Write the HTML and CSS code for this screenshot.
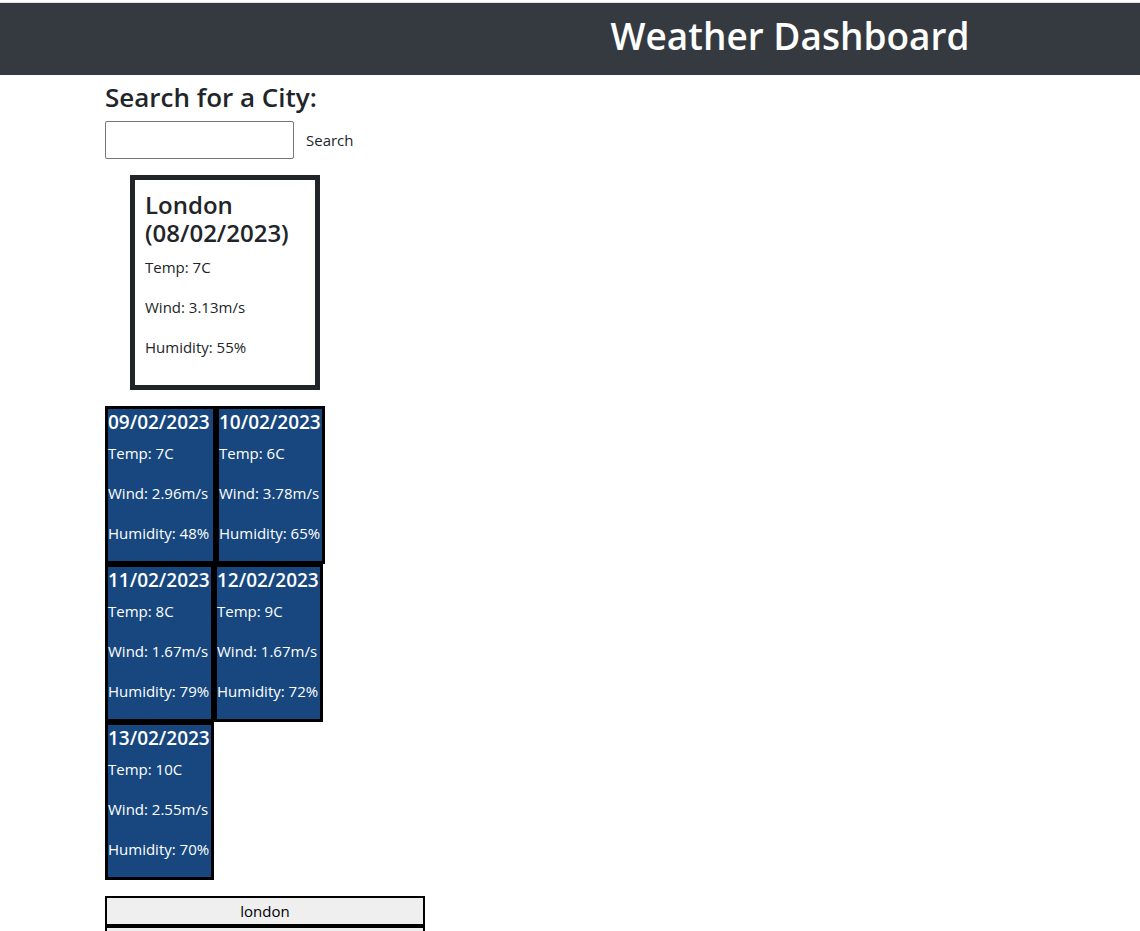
FILE: index.html
```
<!DOCTYPE html>
<html lang="en">
<head>
<meta charset="utf-8">
<meta name="viewport" content="width=device-width, initial-scale=1">
<title>Weather Dashboard</title>
<link rel="stylesheet" href="styles.css">
</head>
<body>
<header class="banner"><h1 class="banner-title">Weather Dashboard</h1></header>
<main class="container">
  <form class="search">
    <label class="search-label" for="city">Search for a City:</label>
    <div class="search-row">
      <input class="search-input" id="city" type="text">
      <button class="search-button" type="button">Search</button>
    </div>
  </form>
  <section class="today">
    <h2 class="today-title">London (08/02/2023)</h2>
    <p>Temp: 7C</p>
    <p>Wind: 3.13m/s</p>
    <p>Humidity: 55%</p>
  </section>
  <section class="forecast">
    <article class="day day-wide">
      <h3 class="day-title">09/02/2023</h3>
      <p>Temp: 7C</p>
      <p>Wind: 2.96m/s</p>
      <p>Humidity: 48%</p>
    </article>
    <article class="day">
      <h3 class="day-title">10/02/2023</h3>
      <p>Temp: 6C</p>
      <p>Wind: 3.78m/s</p>
      <p>Humidity: 65%</p>
    </article>
    <article class="day">
      <h3 class="day-title">11/02/2023</h3>
      <p>Temp: 8C</p>
      <p>Wind: 1.67m/s</p>
      <p>Humidity: 79%</p>
    </article>
    <article class="day">
      <h3 class="day-title">12/02/2023</h3>
      <p>Temp: 9C</p>
      <p>Wind: 1.67m/s</p>
      <p>Humidity: 72%</p>
    </article>
    <article class="day">
      <h3 class="day-title">13/02/2023</h3>
      <p>Temp: 10C</p>
      <p>Wind: 2.55m/s</p>
      <p>Humidity: 70%</p>
    </article>
  </section>
  <nav class="history" aria-label="Search history">
    <button class="history-button" type="button">london</button>
    <button class="history-button" type="button" aria-label="Previous search"></button>
  </nav>
</main>
</body>
</html>
```
FILE: styles.css
```
* {
  box-sizing: border-box;
}

html {
  overflow: hidden;
}

body {
  margin: 0;
  font-family: "Open Sans", "Noto Sans", sans-serif;
  font-size: 15px;
  line-height: 24px;
  color: #212529;
  background: #fff;
}

h1,
h2,
h3,
p {
  margin: 0;
}

p {
  margin-bottom: 16px;
}

button,
input {
  font: inherit;
  color: inherit;
}

.banner {
  margin-top: 2px;
  padding: 9px 0 15px 440px;
  border-top: 1px solid #dee2e6;
  background: #343a40;
  color: #fff;
  text-align: center;
}

.banner-title {
  font-size: 37px;
  font-weight: 600;
  line-height: 48px;
}

.container {
  max-width: 960px;
  margin: 0 auto;
  padding: 5px 15px 0;
}

.search-label {
  display: block;
  margin-bottom: 7px;
  font-size: 26px;
  font-weight: 600;
  line-height: 34px;
}

.search-row {
  display: flex;
}

.search-input {
  width: 189px;
  height: 38px;
  padding: 1px 2px;
  border: 1px solid #767676;
  border-radius: 2px;
  background: #fff;
}

.search-button {
  padding: 6px 12px;
  border: 1px solid transparent;
  border-width: 1px 0;
  background: none;
}

.today {
  width: 190px;
  margin: 16px 25px;
  padding: 11px 10px 10px;
  border: 5px solid #212529;
}

.today-title {
  margin-bottom: 8px;
  font-size: 24px;
  font-weight: 600;
  line-height: 28px;
}

.forecast {
  display: flex;
  flex-wrap: wrap;
  width: 240px;
  margin-bottom: 16px;
}

.day {
  width: 109px;
  padding-bottom: 6px;
  border: 3px solid #000;
  background: #17477e;
  color: #fff;
  white-space: nowrap;
}

.day-wide {
  width: 111px;
}

.day-title {
  margin-bottom: 6px;
  font-size: 19px;
  font-weight: 600;
  line-height: 26px;
}

.day p:last-child {
  margin-bottom: 10px;
}

.history {
  display: flex;
  flex-direction: column;
  width: 320px;
}

.history-button {
  min-height: 30px;
  padding: 1px 6px;
  border: 2px solid #000;
  background: #efefef;
  color: #000;
}
```
